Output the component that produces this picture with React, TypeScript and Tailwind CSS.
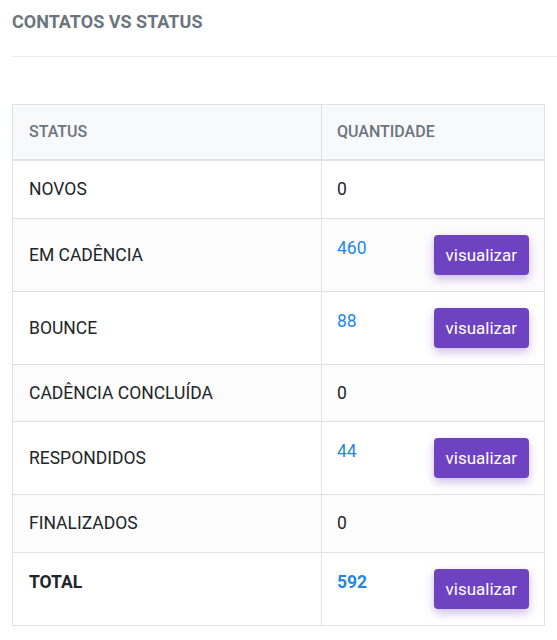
import React from "react";

type Row = { label: string; value: string; link?: boolean; bold?: boolean };

const rows: Row[] = [
  { label: "NOVOS", value: "0" },
  { label: "EM CADÊNCIA", value: "460", link: true },
  { label: "BOUNCE", value: "88", link: true },
  { label: "CADÊNCIA CONCLUÍDA", value: "0" },
  { label: "RESPONDIDOS", value: "44", link: true },
  { label: "FINALIZADOS", value: "0" },
  { label: "TOTAL", value: "592", link: true, bold: true },
];

export default function App() {
  return (
    <div
      className="min-h-[640px] bg-white pl-[12px]"
      style={{ fontFamily: "Roboto, 'Liberation Sans', sans-serif" }}
    >
      <h5 className="pt-[10px] text-[18px] font-bold leading-[24px] text-[#6c757d]">
        CONTATOS VS STATUS
      </h5>
      <div className="mt-[22px] h-px bg-[#e9ecef]" />
      <table className="mt-[47px] w-[533px] border-collapse border border-[#dee2e6] text-[17.5px] leading-[24px] text-[#212529]">
        <thead>
          <tr className="bg-[#f8f9fa]">
            <th className="w-[309px] border border-b-2 border-[#dee2e6] px-[16px] py-[16px] text-left text-[16px] font-medium leading-[22px] text-[#6c757d]">
              STATUS
            </th>
            <th className="border border-b-2 border-[#dee2e6] px-[15px] py-[16px] text-left text-[16px] font-medium leading-[22px] text-[#6c757d]">
              QUANTIDADE
            </th>
          </tr>
        </thead>
        <tbody>
          {rows.map((r, i) => (
            <tr key={r.label} className={i % 2 === 1 ? "bg-[#fcfcfc]" : "bg-white"}>
              <td
                className={`border border-[#dee2e6] px-[16px] py-[16px] ${
                  r.bold ? "align-top font-bold" : "align-middle"
                }`}
              >
                <div className={`h-[24px] ${r.bold ? "mt-px" : ""}`}>{r.label}</div>
              </td>
              <td className="border border-[#dee2e6] px-[15px] py-[16px] align-top">
                {r.link ? (
                  <div className="flex h-[40px] items-start justify-between">
                    <div className={`h-[24px] pt-px text-[#1e88e5] ${r.bold ? "font-bold" : ""}`}>{r.value}</div>
                    <button className="h-[40px] rounded-[4px] bg-[#6f42c1] px-[12px] text-[17px] leading-[24px] text-white shadow-[0_4px_10px_rgba(111,66,193,0.35)]">
                      visualizar
                    </button>
                  </div>
                ) : (
                  <div className="h-[24.5px]">{r.value}</div>
                )}
              </td>
            </tr>
          ))}
        </tbody>
      </table>
    </div>
  );
}
